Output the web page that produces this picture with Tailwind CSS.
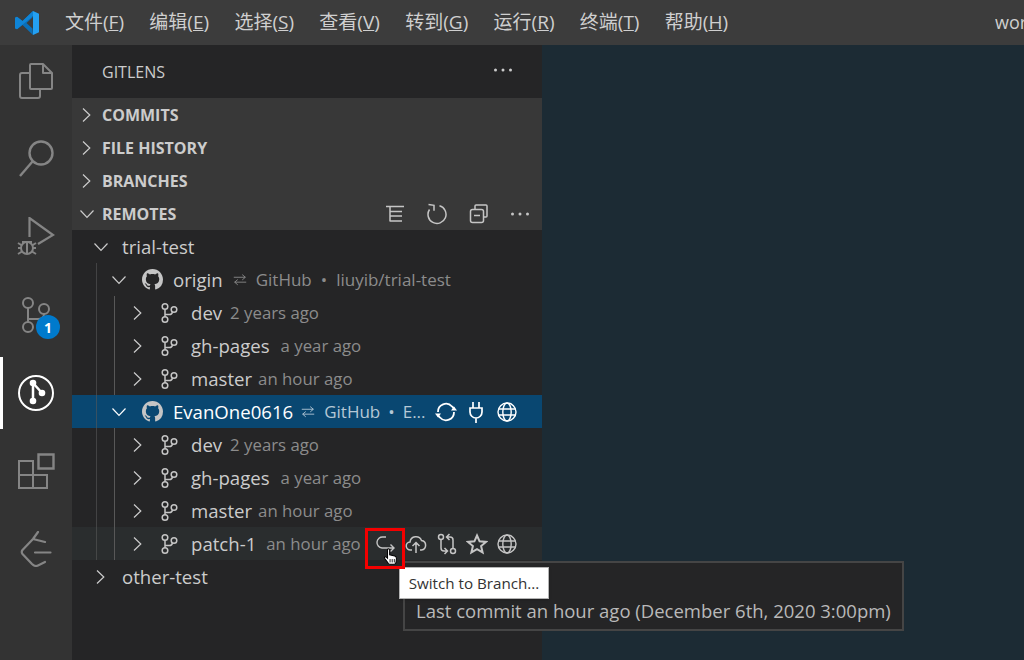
<!DOCTYPE html>
<html lang="zh">
<head>
  <meta charset="UTF-8" />
  <title>GitLens - Visual Studio Code</title>
  <meta name="viewport" content="width=device-width, initial-scale=1.0" />
  <script src="https://cdn.jsdelivr.net/npm/@tailwindcss/browser@4"></script>
</head>
<body class="w-[1024px] h-[660px] overflow-hidden bg-[#1c2b34] font-['Open_Sans','Noto_Sans_CJK_SC',sans-serif] text-[18px] text-[#cccccc]">
  <svg class="hidden">
    <symbol id="chev-r" viewBox="0 0 16 16"><path d="M4 1.500 10.800 8 4 14.500" fill="none" stroke="currentColor" stroke-width="1.200"/></symbol>
    <symbol id="chev-d" viewBox="0 0 16 16"><path d="M1.500 4.500 8 11.300l6.500-6.800" fill="none" stroke="currentColor" stroke-width="1.200"/></symbol>
    <symbol id="branch" viewBox="0 0 22 22" fill="none" stroke="currentColor" stroke-width="1.500"><circle cx="7" cy="4.500" r="2.800"/><circle cx="7" cy="17.500" r="2.800"/><circle cx="16" cy="7.500" r="2.800"/><path d="M7 7.300v7.400M7 12.500h4.500q2.500 0 3-2.500"/></symbol>
    <symbol id="github" viewBox="0 0 16 16"><path fill="currentColor" fill-rule="evenodd" d="M8 0C3.580 0 0 3.580 0 8c0 3.540 2.290 6.530 5.470 7.590.4.070.55-.17.55-.38 0-.19-.01-.82-.01-1.490-2.010.37-2.530-.49-2.690-.94-.09-.23-.48-.94-.82-1.130-.28-.15-.68-.52-.01-.53.63-.01 1.080.58 1.230.82.72 1.210 1.870.87 2.330.66.07-.52.28-.87.51-1.070-1.780-.2-3.640-.89-3.640-3.950 0-.87.31-1.590.82-2.150-.08-.2-.36-1.020.08-2.120 0 0 .67-.21 2.200.82.64-.18 1.320-.27 2-.27.68 0 1.360.09 2 .27 1.530-1.040 2.200-.82 2.200-.82.44 1.100.16 1.920.08 2.120.51.56.82 1.270.82 2.150 0 3.070-1.870 3.750-3.650 3.950.29.25.54.73.54 1.480 0 1.070-.01 1.930-.01 2.200 0 .21.15.46.55.38A8.013 8.013 0 0016 8c0-4.420-3.580-8-8-8z"/></symbol>
    <symbol id="globe" viewBox="0 0 22 22" fill="none" stroke="currentColor" stroke-width="1.400"><circle cx="11" cy="11" r="9"/><ellipse cx="11" cy="11" rx="4.200" ry="9"/><path d="M2.500 8h17M2.500 14h17"/></symbol>
    <symbol id="arrows" viewBox="0 0 18 14" fill="none" stroke="currentColor" stroke-width="1"><path d="M2 4.500h13M11.500 1.500 15 4.500 11.500 7.500M16 10H3M6.500 7 3 10l3.500 3"/></symbol>
  </svg>

  <!-- title bar -->
  <header class="h-[45px] bg-[#3c3c3c] flex items-center overflow-hidden">
    <div class="w-[65px] shrink-0 pl-[14px]">
      <svg class="w-[26px] h-[26px]" viewBox="0 0 26 26">
        <path fill="#0a6fb8" d="M19 1 8.500 11 3 6.800 1 7.800v10.400l2 1 5.500-4.200L19 25l-.5-6.500L12.500 13l6-5.500z"/>
        <path fill="#0f84d6" d="M3 6.800 1 7.800 1 18.200 3 19.200 19 6 19 1 8.500 11z"/>
        <path fill="#24a0f2" d="M19 1l6 2.800v18.400L19 25z"/>
      </svg>
    </div>
    <nav class="flex gap-[25.300px] text-[19px] text-[#cfcfcf] whitespace-nowrap">
      <span>文件(<u>F</u>)</span>
      <span>编辑(<u>E</u>)</span>
      <span>选择(<u>S</u>)</span>
      <span>查看(<u>V</u>)</span>
      <span>转到(<u>G</u>)</span>
      <span>运行(<u>R</u>)</span>
      <span>终端(<u>T</u>)</span>
      <span>帮助(<u>H</u>)</span>
    </nav>
    <div class="ml-auto w-[29px] shrink-0 overflow-hidden whitespace-nowrap text-[#cfcfcf]">workspace</div>
  </header>

  <div class="flex h-[615px]">
    <!-- activity bar -->
    <aside class="w-[72px] shrink-0 bg-[#333333] text-[#858585] flex flex-col items-center gap-[6px]">
      <div class="h-[72px] flex items-center justify-center">
        <svg class="w-[36px] h-[38px]" viewBox="0 0 36 38" fill="none" stroke="currentColor" stroke-width="2" stroke-linejoin="round"><path d="M12 11H4q-2 0-2 2v21q0 2 2 2h16q2 0 2-2v-7"/><path d="M12 3q0-1 1-1h12l9 9v15q0 1-1 1H13q-1 0-1-1zM25 2v9h9"/></svg>
      </div>
      <div class="h-[72px] flex items-center justify-center">
        <svg class="w-[36px] h-[38px]" viewBox="0 0 36 38" fill="none" stroke="currentColor" stroke-width="2.400"><circle cx="23" cy="13" r="11.500"/><path d="M14.500 21.500 2 36"/></svg>
      </div>
      <div class="h-[72px] flex items-center justify-center">
        <svg class="w-[38px] h-[40px]" viewBox="0 0 38 40" fill="none" stroke="currentColor" stroke-width="2"><path d="M12.500 20V1L36 18l-15 9" stroke-width="2.200"/><circle cx="10" cy="31" r="6"/><path d="M5 25h10M10 25v12M1 26l4 2.500M1 31h3.500M1 37l4-2.500M19 26l-4 2.500M19 31h-3.500M19 37l-4-2.500"/></svg>
      </div>
      <div class="h-[72px] flex items-center justify-center relative w-full">
        <svg class="w-[32px] h-[38px] -ml-[4px]" viewBox="0 0 32 38" fill="none" stroke="currentColor" stroke-width="2"><circle cx="10" cy="7" r="5"/><circle cx="10" cy="31" r="5"/><circle cx="26" cy="13" r="5"/><path d="M10 12v14M10 23h10q6 0 6-5"/></svg>
        <span class="absolute left-[36px] top-[36px] w-[24px] h-[24px] rounded-full bg-[#007acc] text-white text-[14px] font-bold flex items-center justify-center">1</span>
      </div>
      <div class="h-[72px] w-full flex items-center justify-center relative text-white">
        <span class="absolute left-0 top-0 w-[3px] h-full bg-white"></span>
        <svg class="w-[36px] h-[36px]" viewBox="0 0 36 36" fill="none" stroke="currentColor" stroke-width="2"><circle cx="18" cy="18" r="17"/><path d="M15 8v18M15 8l9 10" stroke-width="2.500"/><circle cx="15" cy="8" r="3.300" fill="currentColor" stroke="none"/><circle cx="15" cy="26" r="3.300" fill="currentColor" stroke="none"/><circle cx="24" cy="18" r="3.300" fill="currentColor" stroke="none"/></svg>
      </div>
      <div class="h-[72px] flex items-center justify-center">
        <svg class="w-[37px] h-[37px]" viewBox="0 0 37 37" fill="none" stroke="currentColor" stroke-width="2"><path d="M1 8h14v27H1zM1 22h28v13H15"/><path d="M20.500 1.500h15v14h-15z" stroke-width="2.400"/></svg>
      </div>
      <div class="h-[72px] flex items-center justify-center">
        <svg class="w-[32px] h-[36px]" viewBox="0 0 32 36" fill="none" stroke="currentColor" stroke-width="2.200" stroke-linecap="round" stroke-linejoin="round"><path d="M18 1 13 8 2.500 19q-1.500 2 0 4L12 33q3 3 6 1.500L25 31M13 8l12 3M15 21.500h15.500"/></svg>
      </div>
    </aside>

    <!-- gitlens sidebar -->
    <section class="w-[470px] shrink-0 bg-[#252526] relative">
      <div class="h-[53px] flex items-center justify-between pl-[30px] pr-[29px] text-[16px]">
        <span>GITLENS</span>
        <svg class="w-[20px] h-[20px] -mt-[3px]" viewBox="0 0 20 20" fill="currentColor"><circle cx="2.500" cy="10" r="1.500"/><circle cx="10" cy="10" r="1.500"/><circle cx="17.500" cy="10" r="1.500"/></svg>
      </div>

      <div class="h-[33px] bg-[#383838] flex items-center font-bold text-[16px] leading-none">
        <svg class="w-[16px] h-[16px] ml-[7px] mr-[7px]"><use href="#chev-r"/></svg>COMMITS
      </div>
      <div class="h-[33px] bg-[#383838] flex items-center font-bold text-[16px] leading-none">
        <svg class="w-[16px] h-[16px] ml-[7px] mr-[7px]"><use href="#chev-r"/></svg>FILE HISTORY
      </div>
      <div class="h-[33px] bg-[#383838] flex items-center font-bold text-[16px] leading-none">
        <svg class="w-[16px] h-[16px] ml-[7px] mr-[7px]"><use href="#chev-r"/></svg>BRANCHES
      </div>
      <div class="h-[33px] bg-[#383838] flex items-center font-bold text-[16px] leading-none">
        <svg class="w-[16px] h-[16px] ml-[7px] mr-[7px]"><use href="#chev-d"/></svg>REMOTES
        <div class="ml-auto flex items-center gap-[20px] pr-[12px] text-[#c5c5c5]">
          <svg class="w-[22px] h-[22px]" viewBox="0 0 22 22" fill="none" stroke="currentColor" stroke-width="1.500"><path d="M2 3.500h18M6 3.500v15M6 8.500h12M6 13h12M6 18h12"/></svg>
          <svg class="w-[22px] h-[22px]" viewBox="0 0 22 22" fill="none" stroke="currentColor" stroke-width="1.500"><path d="M13.500 2.800A9 9 0 1 1 3.500 6.500M2.500 1.500l5.500.8v5.500"/></svg>
          <svg class="w-[22px] h-[22px]" viewBox="0 0 22 22" fill="none" stroke="currentColor" stroke-width="1.500"><path d="M7 6V3q0-1 1-1h10q1 0 1 1v10q0 1-1 1h-2"/><rect x="2.500" y="6.500" width="13" height="13" rx="2"/><path d="M6 12.500h6"/></svg>
          <svg class="w-[20px] h-[20px]" viewBox="0 0 20 20" fill="currentColor"><circle cx="2.500" cy="10" r="1.500"/><circle cx="10" cy="10" r="1.500"/><circle cx="17.500" cy="10" r="1.500"/></svg>
        </div>
      </div>

      <div class="relative text-[18.6px]">
        <div class="h-[33px] flex items-center pl-[21px] whitespace-nowrap">
          <svg class="w-[16px] h-[16px] mr-[13px]"><use href="#chev-d"/></svg>trial-test
        </div>
        <div class="h-[33px] flex items-center pl-[39px] whitespace-nowrap">
          <svg class="w-[16px] h-[16px] mr-[15px]"><use href="#chev-d"/></svg>
          <svg class="w-[21px] h-[21px] mr-[10px] text-[#c5c5c5]"><use href="#github"/></svg>origin
          <span class="ml-[9px] flex items-center text-[#8c8c8c] text-[17px]">
            <svg class="w-[16px] h-[13px] mr-[8px]"><use href="#arrows"/></svg>GitHub<span class="mx-[9px]">•</span>liuyib/trial-test
          </span>
        </div>

        <div class="h-[33px] flex items-center pl-[58px] whitespace-nowrap">
          <svg class="w-[16px] h-[16px] mr-[12px]"><use href="#chev-r"/></svg>
          <svg class="w-[22px] h-[22px] mr-[11px] text-[#c5c5c5]"><use href="#branch"/></svg>dev
          <span class="ml-[8px] text-[#8c8c8c] text-[16.8px]">2 years ago</span>
        </div>
        <div class="h-[33px] flex items-center pl-[58px] whitespace-nowrap">
          <svg class="w-[16px] h-[16px] mr-[12px]"><use href="#chev-r"/></svg>
          <svg class="w-[22px] h-[22px] mr-[11px] text-[#c5c5c5]"><use href="#branch"/></svg>gh-pages
          <span class="ml-[11px] text-[#8c8c8c] text-[16.8px]">a year ago</span>
        </div>
        <div class="h-[33px] flex items-center pl-[58px] whitespace-nowrap">
          <svg class="w-[16px] h-[16px] mr-[12px]"><use href="#chev-r"/></svg>
          <svg class="w-[22px] h-[22px] mr-[11px] text-[#c5c5c5]"><use href="#branch"/></svg>master
          <span class="ml-[6px] text-[#8c8c8c] text-[16.8px]">an hour ago</span>
        </div>

        <div class="h-[33px] flex items-center pl-[39px] whitespace-nowrap bg-[#094771] text-white">
          <svg class="w-[16px] h-[16px] mr-[15px]"><use href="#chev-d"/></svg>
          <svg class="w-[21px] h-[21px] mr-[10px] text-[#c5c5c5]"><use href="#github"/></svg>EvanOne0616
          <span class="ml-[7px] flex items-center text-[#b5c8d6] text-[17px]">
            <svg class="w-[16px] h-[13px] mr-[8px]"><use href="#arrows"/></svg>GitHub<span class="mx-[8px]">•</span>E...
          </span>
          <div class="ml-auto flex items-center gap-[8px] pr-[24px]">
            <svg class="w-[26px] h-[22px]" viewBox="0 0 24 22" fill="none" stroke="currentColor" stroke-width="1.800"><path d="M4 11a8 8 0 0 1 14-5.500L20.500 8M20 11a8 8 0 0 1-14 5.500L3.500 14"/><path d="M23 9.500h-6l3-4zM1 12.500h6l-3 4z" fill="currentColor" stroke="none"/></svg>
            <svg class="w-[18px] h-[22px]" viewBox="0 0 18 22" fill="none" stroke="currentColor" stroke-width="1.700"><path d="M6 1v6M12 1v6M3 7h12v4a6 6 0 0 1-12 0zM9 17v5"/></svg>
            <svg class="w-[22px] h-[22px] ml-[3px]"><use href="#globe"/></svg>
          </div>
        </div>

        <div class="h-[33px] flex items-center pl-[58px] whitespace-nowrap">
          <svg class="w-[16px] h-[16px] mr-[12px]"><use href="#chev-r"/></svg>
          <svg class="w-[22px] h-[22px] mr-[11px] text-[#c5c5c5]"><use href="#branch"/></svg>dev
          <span class="ml-[8px] text-[#8c8c8c] text-[16.8px]">2 years ago</span>
        </div>
        <div class="h-[33px] flex items-center pl-[58px] whitespace-nowrap">
          <svg class="w-[16px] h-[16px] mr-[12px]"><use href="#chev-r"/></svg>
          <svg class="w-[22px] h-[22px] mr-[11px] text-[#c5c5c5]"><use href="#branch"/></svg>gh-pages
          <span class="ml-[11px] text-[#8c8c8c] text-[16.8px]">a year ago</span>
        </div>
        <div class="h-[33px] flex items-center pl-[58px] whitespace-nowrap">
          <svg class="w-[16px] h-[16px] mr-[12px]"><use href="#chev-r"/></svg>
          <svg class="w-[22px] h-[22px] mr-[11px] text-[#c5c5c5]"><use href="#branch"/></svg>master
          <span class="ml-[6px] text-[#8c8c8c] text-[16.8px]">an hour ago</span>
        </div>
        <div class="h-[33px] flex items-center pl-[58px] whitespace-nowrap bg-[#2a2d2e]">
          <svg class="w-[16px] h-[16px] mr-[12px]"><use href="#chev-r"/></svg>
          <svg class="w-[22px] h-[22px] mr-[11px] text-[#c5c5c5]"><use href="#branch"/></svg>patch-1
          <span class="ml-[10px] text-[#8c8c8c] text-[16.8px]">an hour ago</span>
          <div class="ml-auto flex items-center gap-[8.250px] pr-[24px] text-[#c5c5c5]">
            <svg class="w-[22px] h-[22px]" viewBox="0 0 22 22" fill="none" stroke="currentColor" stroke-width="1.400"><path d="M11 4H8a5.500 5.500 0 0 0-1 11h12M15.500 11.500 19 15l-3.500 3.500"/></svg>
            <svg class="w-[22px] h-[22px]" viewBox="0 0 22 22" fill="none" stroke="currentColor" stroke-width="1.500"><path d="M7 17H5.500a4 4 0 0 1-.5-8 6 6 0 0 1 11.500-1.500A4.800 4.800 0 0 1 16.500 17H15M11 20v-10M7.500 13 11 9.500l3.500 3.500"/></svg>
            <svg class="w-[22px] h-[22px]" viewBox="0 0 22 22" fill="none" stroke="currentColor" stroke-width="1.500"><circle cx="5" cy="4" r="2.500"/><circle cx="17" cy="18" r="2.500"/><path d="M5 6.500V15q0 3 3 3h3M8.500 15l3 3-3 3M17 15.500V7q0-3-3-3h-3M13.500 1l-3 3 3 3"/></svg>
            <svg class="w-[22px] h-[22px]" viewBox="0 0 22 22" fill="none" stroke="currentColor" stroke-width="2"><path d="m11 2.500 2.600 5.800 6.400.6-4.900 4.200 1.500 6.300L11 16.100 5.400 19.400l1.500-6.300L2 8.900l6.400-.6z"/></svg>
            <svg class="w-[22px] h-[22px]"><use href="#globe"/></svg>
          </div>
        </div>

        <div class="h-[33px] flex items-center pl-[21px] whitespace-nowrap">
          <svg class="w-[16px] h-[16px] mr-[13px]"><use href="#chev-r"/></svg>other-test
        </div>

        <!-- indent guides -->
        <span class="absolute left-[24px] top-[33px] h-[297px] w-px bg-[#585858]/60"></span>
        <span class="absolute left-[42px] top-[66px] h-[99px] w-px bg-[#585858]"></span>
        <span class="absolute left-[42px] top-[198px] h-[132px] w-px bg-[#585858]"></span>
      </div>

      <!-- hover card over the tree -->
      <div class="absolute left-[331px] top-[516px] w-[501px] h-[70px] bg-[#252526] border-2 border-[#454545] pl-[11px] pt-[34px] text-[18.5px] text-[#b9b9b9] whitespace-nowrap z-10">
        Last commit an hour ago (December 6th, 2020 3:00pm)
      </div>
      <div class="absolute left-[327px] top-[522px] h-[32px] w-[150px] bg-white border border-[#b4b4b4] text-[#333333] text-[15.2px] flex items-center justify-center whitespace-nowrap z-20 shadow-sm">
        Switch to Branch...
      </div>
      <!-- annotation box and pointer -->
      <div class="absolute left-[293px] top-[483px] w-[40px] h-[41px] border-[3px] border-[#f40000] z-20"></div>
      <svg class="absolute left-[311px] top-[503px] w-[15px] h-[17px] z-30" viewBox="0 0 17 20"><path d="M5 1.500c1-1 2.500-.5 2.500 1V8l6 1.500c1.500.5 2 1 2 2.500l-.5 5c-.2 1-1 2-2 2H7.500c-1 0-1.500-.5-2-1.500L1.500 12C1 11 2.500 9.500 4 11l1 1z" fill="#ffffff" stroke="#000000" stroke-width="1.200"/><path d="M8 13v4M10.500 13v4M13 13v4" stroke="#000000"/></svg>
    </section>

    <main class="flex-1 bg-[#1c2b34]"></main>
  </div>
</body>
</html>
